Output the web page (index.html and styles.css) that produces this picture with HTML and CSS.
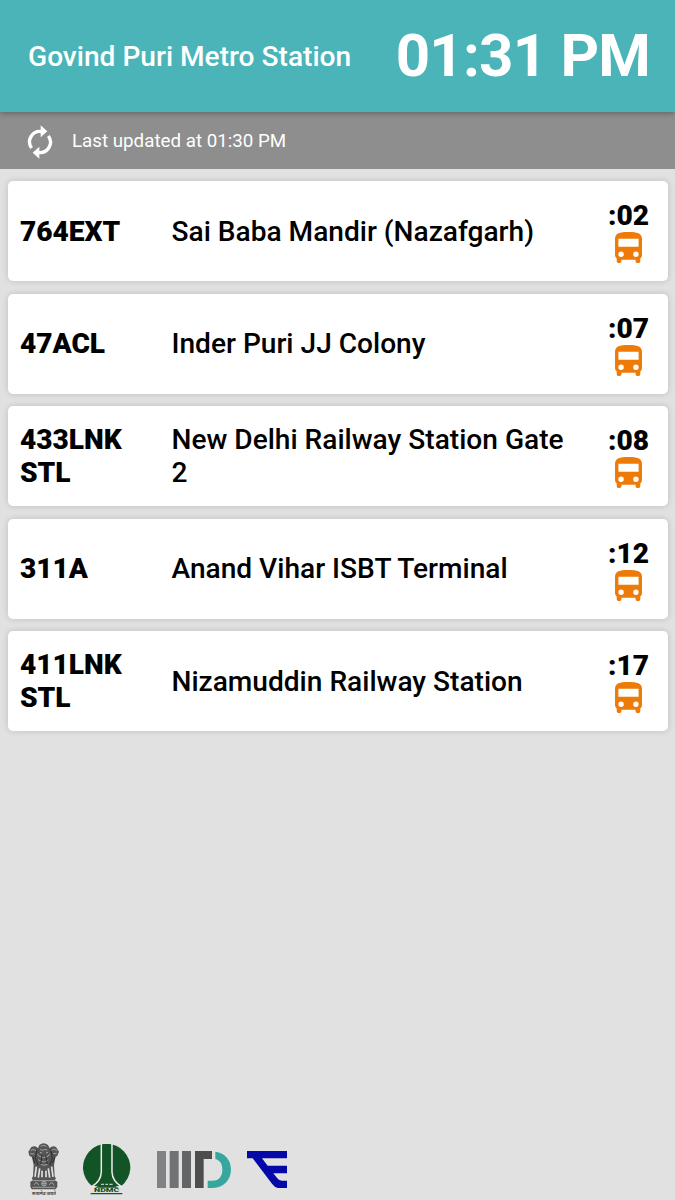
FILE: index.html
```html
<!DOCTYPE html>
<html lang="en">
<head>
<meta charset="utf-8">
<title>Govind Puri Metro Station</title>
<link rel="stylesheet" href="styles.css">
</head>
<body>
<svg class="defs" width="0" height="0">
  <symbol id="bus" viewBox="0 0 80 92">
    <path fill-rule="evenodd" d="M0 20C0 4 14 0 40 0S80 4 80 20V68Q80 75 75 79V87Q75 92 70 92H66Q61 92 61 87V82H19V87Q19 92 14 92H10Q5 92 5 87V79Q0 75 0 68ZM10 20V44H70V20ZM18 58A8 8 0 1 0 18 74A8 8 0 1 0 18 58ZM62 58A8 8 0 1 0 62 74A8 8 0 1 0 62 58Z"/>
  </symbol>
</svg>
<div class="board">
  <header class="header">
    <h1 class="station">Govind Puri Metro Station</h1>
    <div class="clock">01:31 PM</div>
  </header>
  <div class="status">
    <svg class="refresh" viewBox="0 0 96 120">
      <path class="arc" d="M23 78A31 31 0 0 1 54 29M73 42A31 31 0 0 1 42 91"/>
      <path d="M50 10L70 28L50 46ZM46 110L26 92L46 74Z"/>
    </svg>
    <span>Last updated at 01:30 PM</span>
  </div>
  <main class="list">
    <div class="card"><div class="route">764EXT</div><div class="dest">Sai Baba Mandir (Nazafgarh)</div><div class="eta"><span>:02</span><svg class="bus"><use href="#bus"/></svg></div></div>
    <div class="card"><div class="route">47ACL</div><div class="dest">Inder Puri JJ Colony</div><div class="eta"><span>:07</span><svg class="bus"><use href="#bus"/></svg></div></div>
    <div class="card"><div class="route">433LNK STL</div><div class="dest">New Delhi Railway Station Gate 2</div><div class="eta"><span>:08</span><svg class="bus"><use href="#bus"/></svg></div></div>
    <div class="card"><div class="route">311A</div><div class="dest">Anand Vihar ISBT Terminal</div><div class="eta"><span>:12</span><svg class="bus"><use href="#bus"/></svg></div></div>
    <div class="card"><div class="route">411LNK STL</div><div class="dest">Nizamuddin Railway Station</div><div class="eta"><span>:17</span><svg class="bus"><use href="#bus"/></svg></div></div>
  </main>
  <footer class="logos">
    <svg class="emblem" viewBox="38 38 93 160">
      <g fill="#555">
        <path d="M72 44Q85 34 98 44L103 54Q110 44 122 50L131 64L126 76L120 81L116 105L118 137L122 146L117 149L126 154V169L121 177H49L45 169V154L54 149L49 146L53 137L55 105L50 81L42 76L39 64L48 50Q61 44 68 54Z"/>
      </g>
      <g fill="none" stroke="#b3b3b3" stroke-width="2.5">
        <path d="M76 48q8-6 17 0M75 57l7 3 6-3 8 2M46 61l8-4 9 5M108 61l8-5 9 5M45 70l12 1M114 70l10-1M66 72l8 7 11 3 14-5 4-6M74 66l6 2M92 68l6-2M69 88l8 5 10 2 12-6M75 101l11 4 11-3"/>
        <path d="M54 151H118M51 171H120"/>
        <circle cx="86" cy="160" r="7"/>
        <path d="M86 153v14M79 160h14M56 164l5-7 6 2 3 6M102 164l5-7 6 2 3 6"/>
      </g>
      <g fill="none" stroke="#e0e0e0" stroke-width="5">
        <path d="M63 109l-4 31M73 114l-4 28M99 114l4 28M109 109l4 31"/>
        <path d="M80 121v20M92 121v20"/>
      </g>
      <path d="M52 80l6 18M119 80l-7 18M65 58l-5 24 8 23M106 58l5 24-7 23M80 74l-4 28M91 75l5 26" fill="none" stroke="#2c2c2c" stroke-width="3"/>
      <text class="motto" x="86" y="194" text-anchor="middle" textLength="72" lengthAdjust="spacingAndGlyphs">सत्यमेव जयते</text>
    </svg>
    <svg class="ndmc" viewBox="205 42 142 152">
      <path fill="#135427" d="M232 168A71 71 0 1 1 320 168Z"/>
      <path d="M260 42V126Q259 154 230 171M292 42V126Q293 154 322 171" fill="none" stroke="#eceeec" stroke-width="4.5"/>
      <path d="M259 163h9m4 0h8m4 0h10" stroke="#b9c9bd" stroke-width="4"/>
      <path d="M240 173Q248 167 258 167H294Q304 167 312 173Z" fill="#135427"/>
      <text class="ndmc-name" x="276" y="186" text-anchor="middle" textLength="76" lengthAdjust="spacingAndGlyphs">NDMC</text>
      <path d="M228 191H323" stroke="#135427" stroke-width="4"/>
    </svg>
    <svg class="iiid" viewBox="36 63 222 111">
      <path fill="#808386" d="M36 63h27v111H36z"/>
      <path fill="#707376" d="M74 63h27v111H74z"/>
      <path fill="#626466" d="M111 63h27v111h-27z"/>
      <path fill="#4d4d4e" d="M150 63h51v24h-25v87h-26z"/>
      <path fill="#35a79f" d="M211 65C241 69 258 91 258 118C258 150 236 174 204 174H188V152H203C222 152 232 138 232 119C232 101 225 91 211 87Z"/>
    </svg>
    <svg class="wing" viewBox="305 62 121 112">
      <path fill="#0408a8" d="M305 62H426V84H350L367 106H426V129H384L396 144Q401 151 410 151H426V174H405Q390 174 380 160L322 84H305Z"/>
    </svg>
  </footer>
</div>
</body>
</html>
```
FILE: styles.css
```css
body {
  margin: 0;
  font-family: Roboto, "Noto Sans", sans-serif;
  background: #e1e1e1;
}
.defs { position: absolute; }
.board {
  display: flex;
  flex-direction: column;
  height: 1200px;
}
.header {
  display: flex;
  align-items: center;
  justify-content: space-between;
  box-sizing: border-box;
  height: 112.4px;
  padding: 0 25px 0 28px;
  background: #4ab4b8;
  color: #fff;
  z-index: 1;
  box-shadow: 0 1px 6px rgba(0, 0, 0, .35);
}
.station {
  margin: 0;
  font-size: 28.1px;
  font-weight: 500;
  white-space: nowrap;
}
.clock {
  font-size: 60px;
  letter-spacing: -.8px;
  line-height: 70px;
  font-weight: 700;
  white-space: nowrap;
}
.status {
  display: flex;
  align-items: center;
  gap: 16px;
  height: 56.25px;
  padding-left: 24px;
  background: #8e8e8e;
  color: #fff;
  font-size: 18.75px;
}
.refresh {
  width: 32px;
  height: 40px;
  margin-top: 2px;
  fill: #fff;
}
.refresh .arc {
  fill: none;
  stroke: #fff;
  stroke-width: 10;
}
.list {
  display: flex;
  flex-direction: column;
  gap: 12.5px;
  padding: 12.5px 7.5px;
}
.card {
  display: grid;
  grid-template-columns: 151.5px 1fr 78px;
  align-items: center;
  box-sizing: border-box;
  height: 100px;
  padding-left: 12.5px;
  border-radius: 5px;
  background: #fff;
  color: #000;
  font-size: 28.1px;
  line-height: 33px;
  box-shadow: 0 0 6px rgba(0, 0, 0, .16);
}
.route {
  font-weight: 900;
  padding-right: 40px;
}
.dest {
  padding-right: 15px;
  font-weight: 500;
}
.eta {
  display: flex;
  flex-direction: column;
  align-items: center;
  font-weight: 900;
}
.bus {
  width: 27px;
  height: 31px;
  fill: #ee7a08;
}
.logos {
  display: flex;
  align-items: flex-start;
  margin-top: auto;
  height: 57.3px;
  padding-left: 27.7px;
}
.emblem { width: 31px; height: 53.3px; }
.motto { font-size: 13px; font-weight: 700; fill: #444; }
.ndmc { width: 47.3px; height: 50.7px; margin: 1.3px 0 0 24.6px; }
.ndmc-name { font-size: 16px; font-weight: 900; fill: #135427; }
.iiid { width: 74px; height: 37px; margin: 8.3px 0 0 26.4px; }
.wing { width: 40.3px; height: 37.3px; margin: 8px 0 0 15.7px; }
```
